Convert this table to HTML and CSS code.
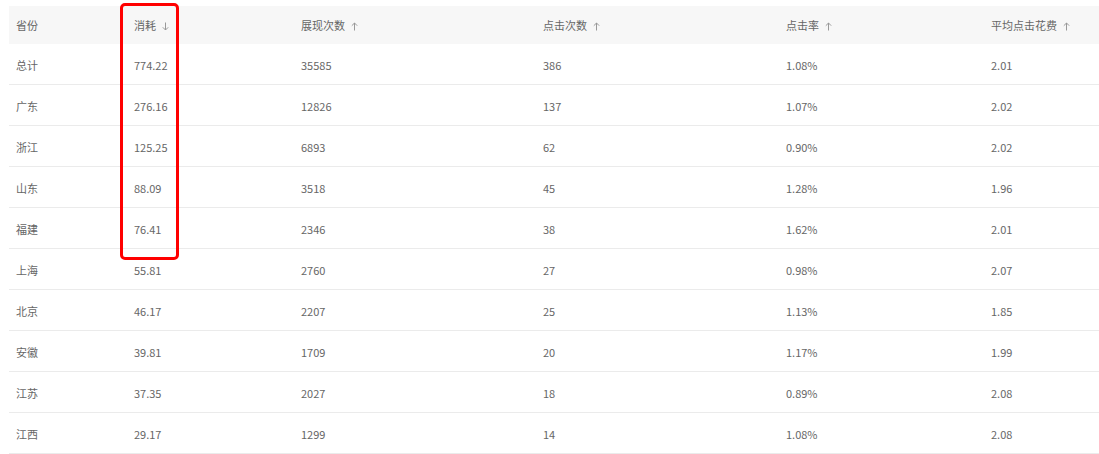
FILE: index.html
```html
<!DOCTYPE html>
<html lang="zh">
<head>
<meta charset="utf-8">
<link rel="stylesheet" href="styles.css">
</head>
<body>
<div class="wrap">
  <table class="grid">
    <colgroup>
      <col class="c1"><col class="c2"><col class="c3"><col class="c4"><col class="c5"><col class="c6">
    </colgroup>
    <thead>
      <tr>
        <th>省份</th>
        <th>消耗<svg class="arr" viewBox="0 0 7 9"><path d="M3.5 0.5V8M0.8 5.3L3.5 8L6.2 5.3"/></svg></th>
        <th>展现次数<svg class="arr" viewBox="0 0 7 9"><path d="M3.5 8.5V1M0.8 3.7L3.5 1L6.2 3.7"/></svg></th>
        <th>点击次数<svg class="arr" viewBox="0 0 7 9"><path d="M3.5 8.5V1M0.8 3.7L3.5 1L6.2 3.7"/></svg></th>
        <th>点击率<svg class="arr" viewBox="0 0 7 9"><path d="M3.5 8.5V1M0.8 3.7L3.5 1L6.2 3.7"/></svg></th>
        <th>平均点击花费<svg class="arr" viewBox="0 0 7 9"><path d="M3.5 8.5V1M0.8 3.7L3.5 1L6.2 3.7"/></svg></th>
      </tr>
    </thead>
    <tbody>
      <tr><td>总计</td><td>774.22</td><td>35585</td><td>386</td><td>1.08%</td><td>2.01</td></tr>
      <tr><td>广东</td><td>276.16</td><td>12826</td><td>137</td><td>1.07%</td><td>2.02</td></tr>
      <tr><td>浙江</td><td>125.25</td><td>6893</td><td>62</td><td>0.90%</td><td>2.02</td></tr>
      <tr><td>山东</td><td>88.09</td><td>3518</td><td>45</td><td>1.28%</td><td>1.96</td></tr>
      <tr><td>福建</td><td>76.41</td><td>2346</td><td>38</td><td>1.62%</td><td>2.01</td></tr>
      <tr><td>上海</td><td>55.81</td><td>2760</td><td>27</td><td>0.98%</td><td>2.07</td></tr>
      <tr><td>北京</td><td>46.17</td><td>2207</td><td>25</td><td>1.13%</td><td>1.85</td></tr>
      <tr><td>安徽</td><td>39.81</td><td>1709</td><td>20</td><td>1.17%</td><td>1.99</td></tr>
      <tr><td>江苏</td><td>37.35</td><td>2027</td><td>18</td><td>0.89%</td><td>2.08</td></tr>
      <tr><td>江西</td><td>29.17</td><td>1299</td><td>14</td><td>1.08%</td><td>2.08</td></tr>
    </tbody>
  </table>
  <div class="highlight"></div>
</div>
</body>
</html>
```

FILE: styles.css
```css
html, body {
  margin: 0;
  padding: 0;
  background: #fff;
}
body {
  font-family: "Microsoft YaHei", "Noto Sans CJK SC", sans-serif;
  font-size: 11px;
  color: #666;
  overflow: hidden;
}
.wrap {
  position: relative;
  padding: 6px 0 0 9px;
}
.grid {
  width: 1100px;
  table-layout: fixed;
  border-collapse: collapse;
}
.c1 { width: 118px; }
.c2 { width: 167px; }
.c3 { width: 242px; }
.c4 { width: 243px; }
.c5 { width: 205px; }
.c6 { width: 125px; }
.grid th {
  background: #f7f7f7;
  height: 38px;
  padding: 0 0 0 7px;
  text-align: left;
  font-weight: normal;
  color: #666;
  white-space: nowrap;
}
.grid td {
  height: 38px;
  padding: 2px 0 0 7px;
  border-bottom: 1px solid #ebebeb;
  white-space: nowrap;
}
.arr {
  width: 7px;
  height: 9px;
  margin-left: 6px;
  vertical-align: -1px;
  fill: none;
  stroke: #999;
  stroke-width: 1;
}
.highlight {
  position: absolute;
  left: 120px;
  top: 3px;
  width: 53px;
  height: 251px;
  border: 3px solid #f00;
  border-radius: 5px;
}
```
